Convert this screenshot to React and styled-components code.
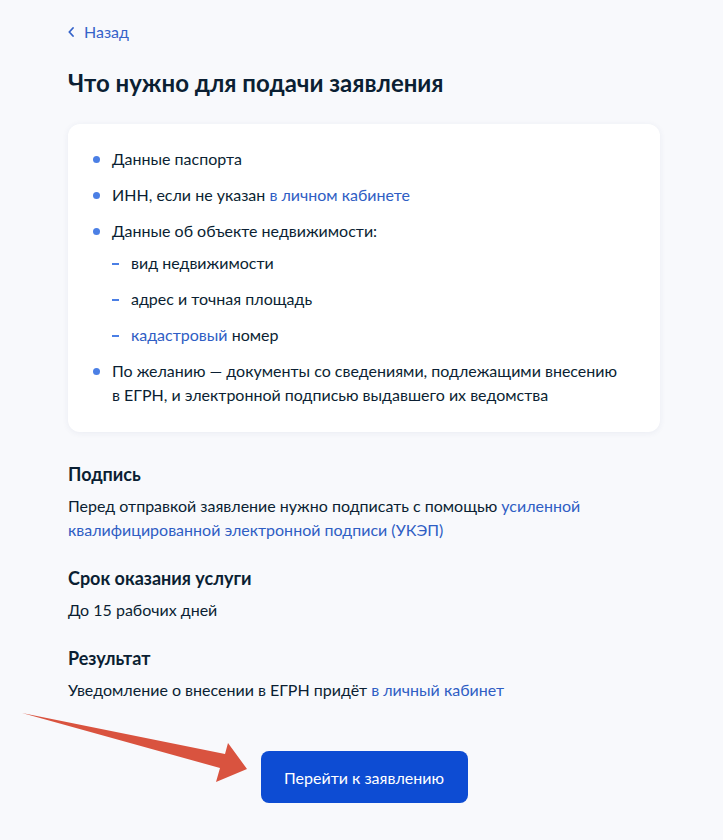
import React from "react";
import styled, { createGlobalStyle } from "styled-components";

const Global = createGlobalStyle`
  html, body { margin: 0; padding: 0; background: #f8f9fc; }
  body { font-family: Lato, "Open Sans", "Noto Sans", sans-serif; color: #0b1f33; }
  * { box-sizing: border-box; }
`;

const Page = styled.div`
  position: relative;
  width: 723px;
  min-height: 840px;
  padding: 20px 0 0 68px;
`;

const Content = styled.div`
  width: 592px;
  display: flex;
  flex-direction: column;
`;

const BackLink = styled.a`
  display: inline-flex;
  align-items: center;
  gap: 10px;
  align-self: flex-start;
  font-size: 16px;
  line-height: 24px;
  color: #3563c9;
  text-decoration: none;
`;

const Title = styled.h1`
  margin: 23px 0 25px;
  font-size: 24px;
  line-height: 32px;
  font-weight: 700;
  color: #0b1f33;
`;

const Card = styled.div`
  background: #fff;
  border-radius: 12px;
  box-shadow: 0 1px 6px rgba(40, 60, 110, 0.07);
  padding: 23px 36px 25px 24px;
`;

const List = styled.ul`
  list-style: none;
  margin: 0;
  padding: 0;
  display: flex;
  flex-direction: column;
  gap: 12px;
`;

const Item = styled.li`
  position: relative;
  padding-left: 20px;
  font-size: 16px;
  line-height: 24px;
  &::before {
    content: "";
    position: absolute;
    left: 1px;
    top: 9px;
    width: 7px;
    height: 7px;
    border-radius: 50%;
    background: #4b7fe5;
  }
`;

const SubList = styled.ul`
  list-style: none;
  margin: 8px 0 0;
  padding: 0;
  display: flex;
  flex-direction: column;
  gap: 12px;
`;

const SubItem = styled.li`
  position: relative;
  padding-left: 19px;
  font-size: 16px;
  line-height: 24px;
  &::before {
    content: "";
    position: absolute;
    left: 0;
    top: 12px;
    width: 7px;
    height: 2px;
    background: #4b7fe5;
  }
`;

const Link = styled.a`
  color: #2f5ec4;
  text-decoration: none;
`;

const Section = styled.section`
  display: flex;
  flex-direction: column;
  gap: 8px;
  margin-top: ${(p) => p.$top}px;
`;

const SectionTitle = styled.h2`
  margin: 0;
  font-size: 18px;
  line-height: 24px;
  font-weight: 700;
`;

const Text = styled.p`
  margin: 0;
  font-size: 16px;
  line-height: 24px;
`;

const ButtonRow = styled.div`
  display: flex;
  justify-content: center;
  margin-top: 49px;
`;

const Button = styled.button`
  width: 207px;
  height: 52px;
  border: none;
  border-radius: 8px;
  background: #0d4cd3;
  color: #fff;
  font-family: Lato, "Open Sans", sans-serif;
  font-size: 16px;
  cursor: pointer;
`;

const ArrowOverlay = styled.svg`
  position: absolute;
  left: 0;
  top: 0;
  pointer-events: none;
`;

export default function App() {
  return (
    <>
      <Global />
      <Page>
        <Content>
          <BackLink href="#">
            <svg width="6" height="10" viewBox="0 0 6 10">
              <path d="M5 1 L1.3 5 L5 9" fill="none" stroke="#3563c9" strokeWidth="1.8" strokeLinecap="round" strokeLinejoin="round" />
            </svg>
            Назад
          </BackLink>
          <Title>Что нужно для подачи заявления</Title>
          <Card>
            <List>
              <Item>Данные паспорта</Item>
              <Item>
                ИНН, если не указан <Link href="#">в личном кабинете</Link>
              </Item>
              <Item>
                Данные об объекте недвижимости:
                <SubList>
                  <SubItem>вид недвижимости</SubItem>
                  <SubItem>адрес и точная площадь</SubItem>
                  <SubItem>
                    <Link href="#">кадастровый</Link> номер
                  </SubItem>
                </SubList>
              </Item>
              <Item>
                По желанию — документы со сведениями, подлежащими внесению в ЕГРН, и электронной подписью выдавшего их ведомства
              </Item>
            </List>
          </Card>
          <Section $top={30}>
            <SectionTitle>Подпись</SectionTitle>
            <Text>
              Перед отправкой заявление нужно подписать с помощью{" "}
              <Link href="#">усиленной квалифицированной электронной подписи (УКЭП)</Link>
            </Text>
          </Section>
          <Section $top={24}>
            <SectionTitle>Срок оказания услуги</SectionTitle>
            <Text>До 15 рабочих дней</Text>
          </Section>
          <Section $top={24}>
            <SectionTitle>Результат</SectionTitle>
            <Text>
              Уведомление о внесении в ЕГРН придёт <Link href="#">в личный кабинет</Link>
            </Text>
          </Section>
          <ButtonRow>
            <Button>Перейти к заявлению</Button>
          </ButtonRow>
        </Content>
        <ArrowOverlay width="723" height="840" viewBox="0 0 723 840">
          <polygon
            points="22,713 225,754 228,743 247,769 216,782 220,768"
            fill="#d9533f"
          />
        </ArrowOverlay>
      </Page>
    </>
  );
}
